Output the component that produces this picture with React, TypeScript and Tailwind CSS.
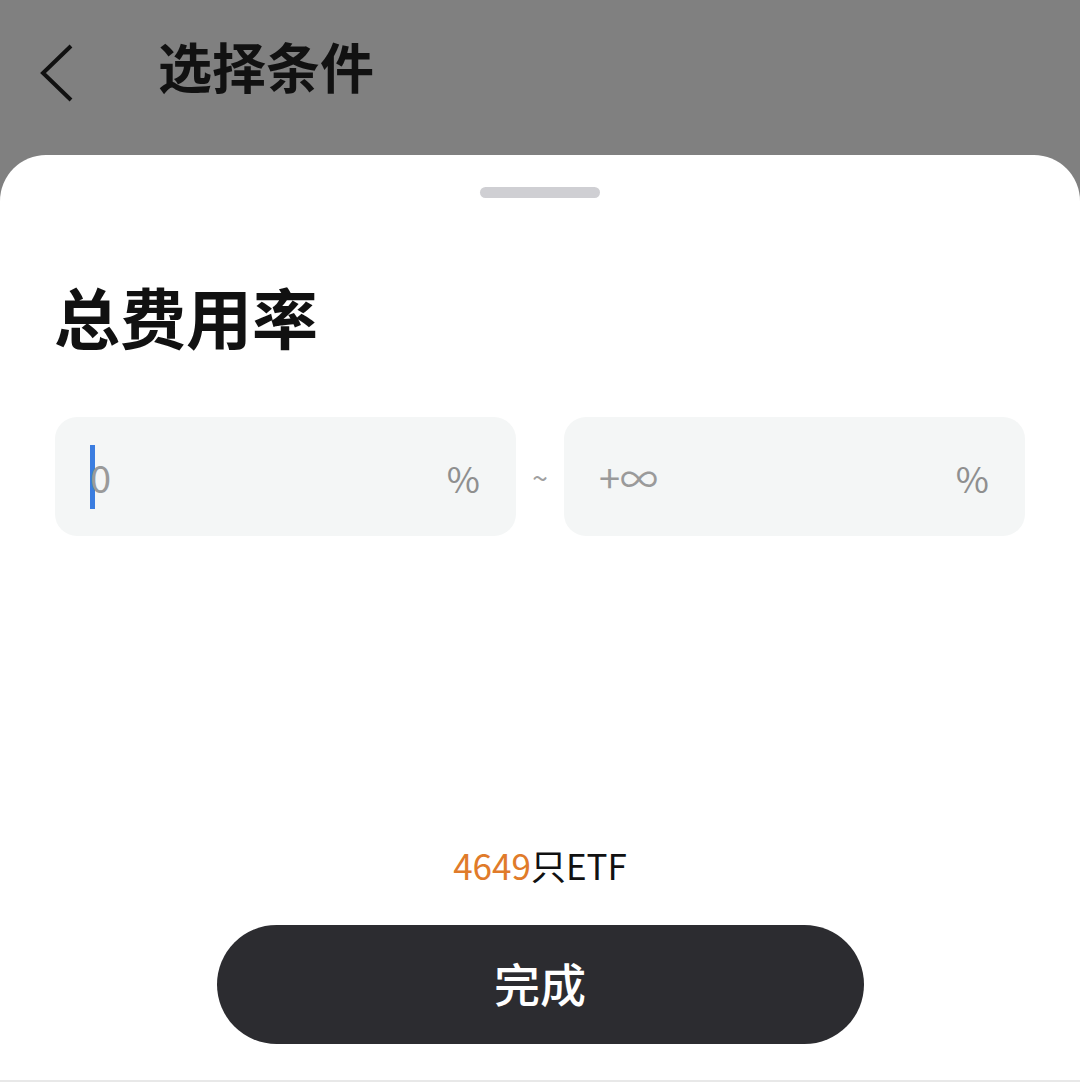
import React from 'react';

const font = { fontFamily: '"Noto Sans CJK SC", "Noto Sans", sans-serif' };

function RangeBox({ value, caret }: { value: string; caret?: boolean }) {
  return (
    <div className="flex h-[119px] flex-1 items-center justify-between rounded-[22px] bg-[#f4f6f6] pl-[35px] pr-[36px]">
      <div className="flex items-center">
        {caret && <span className="mr-[-5px] h-[64px] w-[5px] bg-[#3b7de0]" />}
        <span className="text-[38px] text-[#9a9a9a]">{value}</span>
      </div>
      <span className="text-[36px] text-[#8f8f8f]">%</span>
    </div>
  );
}

export default function App() {
  return (
    <div className="flex h-[1082px] w-[1080px] flex-col overflow-hidden bg-[#808080]" style={font}>
      {/* dimmed header */}
      <div className="flex h-[155px] shrink-0 items-start pl-[38px] pt-[40px]">
        <svg width="36" height="60" viewBox="0 0 36 60" className="mt-[3px]">
          <path d="M33 3 L5 30 L33 57" fill="none" stroke="#111" strokeWidth="4" />
        </svg>
        <h1 className="ml-[84px] mt-[-6px] text-[54px] font-bold leading-[64px] text-[#111]">选择条件</h1>
      </div>

      {/* sheet */}
      <div className="flex flex-1 flex-col rounded-t-[46px] bg-white">
        <div className="flex justify-center pt-[32px]">
          <div className="h-[11px] w-[120px] rounded-full bg-[#cfcfd3]" />
        </div>

        <h2 className="ml-[54px] mt-[84px] text-[66px] font-bold leading-[66px] text-[#111]">总费用率</h2>

        <div className="mx-[55px] mt-[69px] flex items-center">
          <RangeBox value="0" caret />
          <span className="w-[48px] text-center text-[28px] text-[#a0a0a0]">~</span>
          <RangeBox value="+∞" />
        </div>

        <div className="flex-1" />

        <p className="text-center text-[35px] leading-[40px] text-[#111]">
          <span className="text-[#e07b2a]">4649</span>只ETF
        </p>

        <div className="flex justify-center pt-[40px] pb-[36px]">
          <button className="flex h-[119px] w-[647px] items-center justify-center rounded-full bg-[#2c2c30] pb-[4px] text-[46px] font-medium text-white">
            完成
          </button>
        </div>
        <div className="h-[2px] bg-[#e8e8e8]" />
      </div>
    </div>
  );
}
